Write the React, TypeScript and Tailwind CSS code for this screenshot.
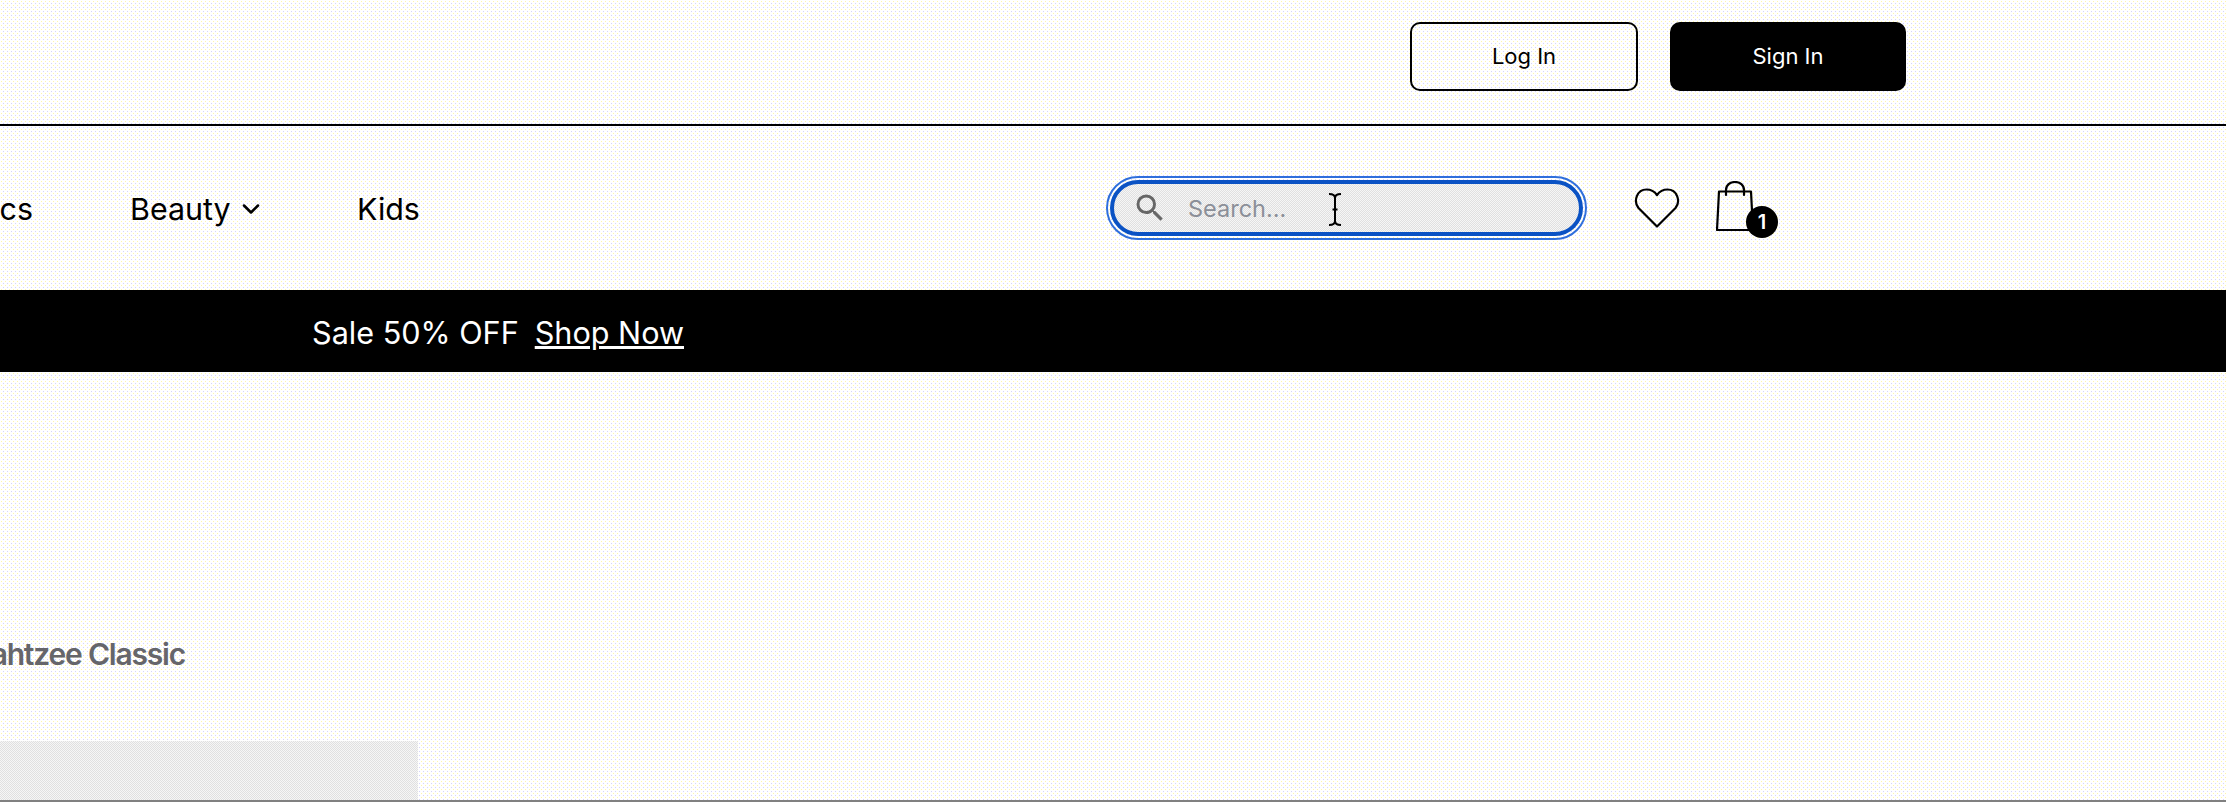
import { ChevronDown } from "lucide-react";
import { MdSearch } from "react-icons/md";

const font = "font-['Inter','Liberation_Sans',sans-serif]";
const dither =
  "bg-[radial-gradient(circle_at_1.5px_1.5px,#fff7a8_0.55px,transparent_0.6px),radial-gradient(circle_at_3.5px_3.5px,#d4d4fb_0.55px,transparent_0.6px)] bg-[length:4px_4px]";
const grey = "bg-[repeating-conic-gradient(#e0e0e0_0_25%,#f6f6f6_0_50%)] bg-[length:2px_2px]";

function Heart() {
  return (
    <svg width="46" height="40" viewBox="0 0 46 40" fill="none" stroke="black" strokeWidth="2.2" strokeLinejoin="round">
      <path d="M23 38.5 L4.5 20 C-1 13 3 1.5 12.5 1.5 C17 1.5 20.5 3.5 23 7 C25.5 3.5 29 1.5 33.5 1.5 C43 1.5 47 13 41.5 20 Z" />
    </svg>
  );
}

function Bag() {
  return (
    <svg width="38" height="50" viewBox="0 0 38 50" fill="none" stroke="black" strokeWidth="2.2" strokeLinecap="round" strokeLinejoin="round">
      <path d="M3 10.5 H35 L37 49 H1 Z" />
      <path d="M10 14 V9 C10 4 14 1 19 1 C24 1 28 4 28 9 V14" />
    </svg>
  );
}

function TextCursor() {
  return (
    <svg width="14" height="33" viewBox="0 0 14 33" fill="none" stroke="black" strokeWidth="2">
      <path d="M1 1 C4 1 7 2 7 5 C7 2 10 1 13 1" />
      <path d="M7 5 V28" />
      <path d="M1 32 C4 32 7 31 7 28 C7 31 10 32 13 32" />
      <path d="M4.5 16.5 H9.5" />
    </svg>
  );
}

export default function App() {
  return (
    <div className={`relative h-[802px] w-[2226px] overflow-hidden bg-white ${dither} ${font}`}>
      <div className="flex h-[126px] items-start border-b-2 border-black pl-[1410px] pt-[22px]">
        <button className="h-[69px] w-[228px] rounded-[10px] border-2 border-black text-[22px] text-black">Log In</button>
        <button className="ml-[32px] h-[69px] w-[236px] rounded-[10px] bg-black text-[22px] text-white">Sign In</button>
      </div>

      <div className="flex h-[164px] items-center text-[30.4px] text-black">
        <div className="flex w-[130px] justify-end whitespace-nowrap pr-[97px] pt-[3px]">Electronics</div>
        <span className="flex w-[227px] items-center gap-[6px] pt-[3px]">
          Beauty <ChevronDown size={28} strokeWidth={2.2} />
        </span>
        <span className="w-[753px] pt-[3px]">Kids</span>
        <div className={`relative flex h-[56px] w-[473px] items-center rounded-full border-4 border-[#0a52c4] pl-[18px] outline-2 outline-offset-2 outline-[#2f6fdc] ${grey}`}>
          <MdSearch size={36} className="text-[#666666]" />
          <span className="ml-[20px] pt-[2px] text-[23.5px] text-[#8b8f98]">Search...</span>
          <div className="absolute left-[214px] top-[9px]"><TextCursor /></div>
        </div>
        <div className="ml-[51px]"><Heart /></div>
        <div className="relative mb-[5px] ml-[36px]">
          <Bag />
          <span className="absolute left-[30px] top-[25px] flex h-[32px] w-[32px] items-center justify-center rounded-full bg-black text-xl font-semibold text-white">1</span>
        </div>
      </div>

      <div className="flex h-[82px] items-center bg-black pl-[312px] pt-[3px] text-[30.6px] text-white">
        <span>Sale 50% OFF</span>
        <span className="ml-[16px] underline">Shop Now</span>
      </div>

      <div className="mt-[260px] flex w-[185px] justify-end whitespace-nowrap text-[30px] font-semibold tracking-[-0.04em] text-[#66666b]">Yahtzee Classic</div>

      <div className={`mt-[64px] h-[59px] w-[418px] ${grey}`} />
      <div className="absolute bottom-0 left-0 h-[2px] w-full bg-[#808080]" />
    </div>
  );
}
